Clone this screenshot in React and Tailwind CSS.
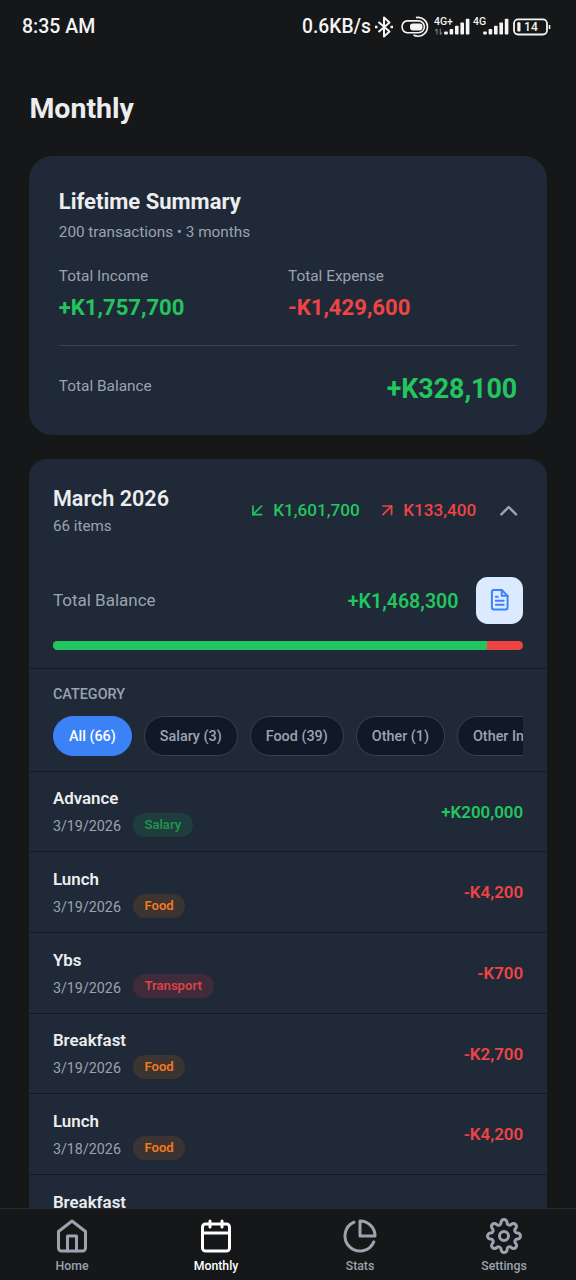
import { useState } from "react";
import clsx from "clsx";
import {
  FiArrowDownLeft,
  FiArrowUpRight,
  FiCalendar,
  FiChevronUp,
  FiFileText,
  FiHome,
  FiPieChart,
  FiSettings,
} from "react-icons/fi";

const categories = [
  "All (66)",
  "Salary (3)",
  "Food (39)",
  "Other (1)",
  "Other Income (2)",
];

const transactions = [
  { id: 1, name: "Advance", date: "3/19/2026", tag: "Salary", amount: "+K200,000" },
  { id: 2, name: "Lunch", date: "3/19/2026", tag: "Food", amount: "-K4,200" },
  { id: 3, name: "Ybs", date: "3/19/2026", tag: "Transport", amount: "-K700" },
  { id: 4, name: "Breakfast", date: "3/19/2026", tag: "Food", amount: "-K2,700" },
  { id: 5, name: "Lunch", date: "3/18/2026", tag: "Food", amount: "-K4,200" },
  { id: 6, name: "Breakfast", date: "3/18/2026", tag: "Food", amount: "-K2,700" },
];

const tagStyles = {
  Salary: "bg-[#1f3d3c] text-[#21924f]",
  Food: "bg-[#3c3433] text-[#f07a1c]",
  Transport: "bg-[#3f2b39] text-[#dc4349]",
};

const tabs = [
  { name: "Home", Icon: FiHome },
  { name: "Monthly", Icon: FiCalendar },
  { name: "Stats", Icon: FiPieChart },
  { name: "Settings", Icon: FiSettings },
];

const Signal = ({ label, data }) => (
  <svg width="38" height="22" viewBox="0 0 38 22" fill="#f4f4f4">
    <text x="0" y="8.5" fontSize="10.5" fontWeight="500" fontFamily="Roboto, sans-serif">
      {label}
    </text>
    {data && (
      <path
        d="M3 18.5v-5.5M1.2 14.8 3 12.8M6.3 12.8v5.7M8 16.6l-1.7 2"
        stroke="#77797b"
        strokeWidth="1.2"
        fill="none"
      />
    )}
    <rect x="10.2" y="15.5" width="3.6" height="3" rx="0.8" />
    <rect x="15.6" y="13" width="3.6" height="5.5" rx="0.8" />
    <rect x="21" y="9.8" width="3.6" height="8.7" rx="0.8" />
    <rect x="26.4" y="6.5" width="3.6" height="12" rx="0.8" />
    <rect x="31.8" y="2.7" width="3.6" height="15.8" rx="0.8" />
  </svg>
);

const StatusBar = () => (
  <div className="flex h-[53px] shrink-0 items-center pl-[22px] text-[19.5px] font-medium text-[#f4f4f4]">
    <span>8:35 AM</span>
    <div className="ml-auto flex items-center pr-[25px]">
      <span className="pt-px text-[19.3px]">0.6KB/s</span>
      <svg className="ml-[3px]" width="20" height="22" viewBox="0 0 20 22" fill="none" stroke="#f4f4f4" strokeWidth="2">
        <path d="M4.5 6 15.5 15.5 10 20.5V1.5l5.5 5L4.5 16" strokeLinejoin="round" />
        <path d="M1 11h2.5M16.5 11H19" strokeWidth="2.4" />
      </svg>
      <svg className="ml-[6px]" width="30" height="22" viewBox="0 0 30 22" fill="none" stroke="#f4f4f4" strokeWidth="1.6">
        <path d="M18.5 16.7H7A6 6 0 0 1 7 4.9h11.5a5.9 5.9 0 0 1 0 11.8z" />
        <path d="M16 1.6A9.4 9.4 0 1 1 13.5 19" />
        <rect x="10" y="7.4" width="12.5" height="7" rx="2.8" fill="#f4f4f4" stroke="none" />
      </svg>
      <div className="ml-1 flex gap-px">
        <Signal label="4G+" data />
        <Signal label="4G" />
      </div>
      <svg className="ml-[2px]" width="38" height="18" viewBox="0 0 38 18" fill="none">
        <rect x="1" y="1.3" width="33" height="15.2" rx="4.2" stroke="#f4f4f4" strokeWidth="1.8" />
        <rect x="4.3" y="4.2" width="3.2" height="9.4" rx="0.8" fill="#f4f4f4" />
        <path d="M36.5 7v4" stroke="#f4f4f4" strokeWidth="1.6" />
        <text x="11" y="13.2" fontSize="12" fontWeight="500" letterSpacing="0.3" fill="#f4f4f4" fontFamily="Roboto, sans-serif">
          14
        </text>
      </svg>
    </div>
  </div>
);

const Summary = () => (
  <div className="h-[279px] shrink-0 rounded-[23.5px] bg-[#1f2937] px-[29.4px] pt-[30px]">
    <h2 className="text-[22px] leading-8 font-bold text-[#ecedee]">
      Lifetime Summary
    </h2>
    <p className="mt-1 text-[15.3px] leading-5 text-[#9ca3af]">
      200 transactions • 3 months
    </p>
    <div className="mt-6 grid grid-cols-2">
      <div>
        <p className="text-[15.4px] leading-5 text-[#9ca3af]">Total Income</p>
        <p className="mt-[7px] text-[22.1px] leading-7 font-bold text-[#22c55e]">
          +K1,757,700
        </p>
      </div>
      <div>
        <p className="text-[15.4px] leading-5 text-[#9ca3af]">Total Expense</p>
        <p className="mt-[7px] text-[22.1px] leading-7 font-bold text-[#ef4444]">
          -K1,429,600
        </p>
      </div>
    </div>
    <div className="mt-6 flex items-start justify-between border-t border-[#374151] pt-[25px]">
      <p className="mt-[5px] text-[15.4px] leading-5 text-[#9ca3af]">
        Total Balance
      </p>
      <p className="text-[26.8px] leading-9 font-bold text-[#22c55e]">
        +K328,100
      </p>
    </div>
  </div>
);

const Transaction = ({ item }) => (
  <div className="flex h-[80.7px] shrink-0 items-center justify-between border-b-[1.5px] border-[#111827] px-[23.5px]">
    <div className="pt-[2px]">
      <p className="text-[16.9px] leading-6 font-semibold text-[#ecedee]">
        {item.name}
      </p>
      <div className="mt-px flex items-center gap-[11.75px]">
        <span className="pt-[3px] text-[14.3px] leading-6 text-[#9ca3af]">
          {item.date}
        </span>
        <span
          className={clsx(
            "h-6 rounded-full px-[11.75px] text-[13.1px] leading-6 font-semibold",
            tagStyles[item.tag]
          )}
        >
          {item.tag}
        </span>
      </div>
    </div>
    <p
      className={clsx(
        "pt-[2px] text-[16.9px] font-semibold",
        item.amount.startsWith("+") ? "text-[#22c55e]" : "text-[#ef4444]"
      )}
    >
      {item.amount}
    </p>
  </div>
);

const MonthCard = () => {
  const [selected, setSelected] = useState(categories[0]);
  const income = 1601700;
  const expense = 133400;
  const share = (income / (income + expense)) * 100;

  return (
    <div className="mt-6 min-h-0 flex-1 overflow-hidden rounded-t-[17.6px] bg-[#1f2937]">
      <div className="h-[210px] border-b-[1.5px] border-[#111827] px-[23.5px] pt-[26px]">
        <div className="flex items-center">
          <div>
            <h2 className="text-[21.6px] leading-7 font-semibold text-[#ecedee]">
              March 2026
            </h2>
            <p className="mt-[3px] text-[15.2px] leading-5 text-[#9ca3af]">
              66 items
            </p>
          </div>
          <div className="ml-auto flex items-center text-[17.1px] font-medium">
            <FiArrowDownLeft size={20.6} color="#22c55e" />
            <span className="ml-[6px] text-[#22c55e]">K1,601,700</span>
            <FiArrowUpRight className="ml-[17px]" size={20.6} color="#ef4444" />
            <span className="ml-[6px] text-[#ef4444]">K133,400</span>
            <FiChevronUp className="ml-[17.6px]" size={29.4} color="#9ca3af" />
          </div>
        </div>
        <div className="mt-[40.5px] flex items-center">
          <p className="pt-[2px] text-[17px] text-[#9ca3af]">Total Balance</p>
          <p className="ml-auto pt-[3px] text-[19.6px] font-semibold text-[#22c55e]">
            +K1,468,300
          </p>
          <button className="ml-[17.6px] flex size-[47px] items-center justify-center rounded-[11.75px] bg-[#dbeafe]">
            <FiFileText size={23.5} color="#3b82f6" />
          </button>
        </div>
        <div className="mt-[17.3px] flex h-[9px] overflow-hidden rounded-full bg-[#ef4444]">
          <div className="bg-[#22c55e]" style={{ width: `${share}%` }} />
        </div>
      </div>
      <div className="h-[102.5px] border-b-[1.5px] border-[#111827] px-[23.5px] pt-4">
        <p className="text-[14.4px] leading-5 font-medium text-[#9ca3af]">
          CATEGORY
        </p>
        <div className="mt-[11px] flex gap-[11.75px] overflow-hidden">
          {categories.map((category) => (
            <button
              key={category}
              onClick={() => setSelected(category)}
              className={clsx(
                "h-10 shrink-0 rounded-full border px-[15.1px] pt-px text-[14.4px] font-medium",
                category === selected
                  ? "border-[#3b82f6] bg-[#3b82f6] text-white"
                  : "border-[#374151] bg-[#111827] text-[#9ca3af]"
              )}
            >
              {category}
            </button>
          ))}
        </div>
      </div>
      {transactions.map((item) => (
        <Transaction key={item.id} item={item} />
      ))}
    </div>
  );
};

const TabBar = () => (
  <div className="grid h-[72px] shrink-0 grid-cols-4 border-t border-[#272c31] bg-[#151718]">
    {tabs.map(({ name, Icon }) => (
      <div
        key={name}
        className={clsx(
          "flex flex-col items-center pt-[9px]",
          name === "Monthly" ? "text-white" : "text-[#9ca3af]"
        )}
      >
        <Icon size={36} />
        <span className="mt-1 text-[12.3px] leading-4 font-medium">
          {name}
        </span>
      </div>
    ))}
  </div>
);

const App = () => {
  return (
    <div className="flex h-[1280px] w-full flex-col overflow-hidden bg-[#151718] font-[Roboto,sans-serif]">
      <StatusBar />
      <div className="flex min-h-0 flex-1 flex-col px-[29.4px]">
        <h1 className="mt-9 mb-[27px] text-[28.5px] leading-10 font-bold text-[#ecedee]">
          Monthly
        </h1>
        <Summary />
        <MonthCard />
      </div>
      <TabBar />
    </div>
  );
};

export default App;
